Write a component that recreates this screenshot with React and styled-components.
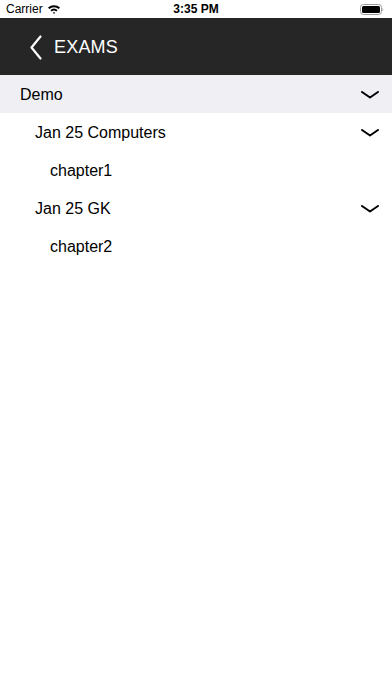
import React from 'react';
import styled, { createGlobalStyle } from 'styled-components';

const GlobalStyle = createGlobalStyle`
  html, body {
    margin: 0;
    padding: 0;
    background: #ffffff;
    font-family: "Liberation Sans", Arial, sans-serif;
  }
`;

const Screen = styled.div`
  width: 392px;
  height: 696px;
  background: #ffffff;
  display: flex;
  flex-direction: column;
  overflow: hidden;
`;

const StatusBar = styled.div`
  height: 18px;
  display: grid;
  grid-template-columns: 1fr auto 1fr;
  align-items: center;
  padding: 0 6px;
  font-size: 12px;
  color: #000;
`;

const Carrier = styled.div`
  display: flex;
  align-items: center;
  gap: 4px;
`;

const Time = styled.div`
  font-weight: bold;
  font-size: 12px;
`;

const Battery = styled.div`
  justify-self: end;
  display: flex;
  align-items: center;
  margin-right: 2px;
`;

const NavBar = styled.div`
  height: 57px;
  box-sizing: border-box;
  padding: 2px 0 0 30px;
  background: #262626;
  display: flex;
  align-items: center;
  gap: 12px;
`;

const NavTitle = styled.span`
  color: #ffffff;
  font-size: 18px;
  letter-spacing: 0.2px;
`;

const List = styled.div`
  display: flex;
  flex-direction: column;
`;

const Row = styled.div`
  height: 38px;
  box-sizing: border-box;
  display: flex;
  align-items: center;
  justify-content: space-between;
  padding: 1px 13px 0 ${p => 20 + p.level * 15}px;
  background: ${p => (p.active ? '#efeff4' : '#ffffff')};
  font-size: 16px;
  color: #000;
`;

const Chevron = () => (
  <svg width="18" height="8" viewBox="0 0 18 8">
    <path d="M1 1 L9 6.5 L17 1" fill="none" stroke="#000" strokeWidth="2" strokeLinecap="round" strokeLinejoin="round" />
  </svg>
);

const items = [
  { label: 'Demo', level: 0, active: true, expandable: true },
  { label: 'Jan 25 Computers', level: 1, expandable: true },
  { label: 'chapter1', level: 2 },
  { label: 'Jan 25 GK', level: 1, expandable: true },
  { label: 'chapter2', level: 2 }
];

const App = () => (
  <Screen>
    <GlobalStyle />
    <StatusBar>
      <Carrier>
        Carrier
        <svg width="14" height="10" viewBox="0 0 14 10">
          <path d="M1 3.6 A9 9 0 0 1 13 3.6 L11.7 5 A7 7 0 0 0 2.3 5 Z" fill="#000" />
          <path d="M3.4 6.1 A5.4 5.4 0 0 1 10.6 6.1 L9.3 7.5 A3.6 3.6 0 0 0 4.7 7.5 Z" fill="#000" />
          <path d="M5.8 8.6 A2 2 0 0 1 8.2 8.6 L7 9.9 Z" fill="#000" />
        </svg>
      </Carrier>
      <Time>3:35 PM</Time>
      <Battery>
        <svg width="24" height="11" viewBox="0 0 24 11">
          <rect x="0.5" y="0.5" width="21" height="10" rx="3" fill="none" stroke="#999" />
          <rect x="2" y="2" width="18" height="7" rx="1.5" fill="#000" />
          <path d="M22.5 3.5 Q24 5.5 22.5 7.5 Z" fill="#999" />
        </svg>
      </Battery>
    </StatusBar>
    <NavBar>
      <svg width="12" height="25" viewBox="0 0 12 25">
        <path d="M10.5 1.5 L1.5 12.5 L10.5 23.5" fill="none" stroke="#fff" strokeWidth="2.2" strokeLinecap="round" strokeLinejoin="round" />
      </svg>
      <NavTitle>EXAMS</NavTitle>
    </NavBar>
    <List>
      {items.map(item => (
        <Row key={item.label} level={item.level} active={item.active}>
          <span>{item.label}</span>
          {item.expandable && <Chevron />}
        </Row>
      ))}
    </List>
  </Screen>
);

export default App;
